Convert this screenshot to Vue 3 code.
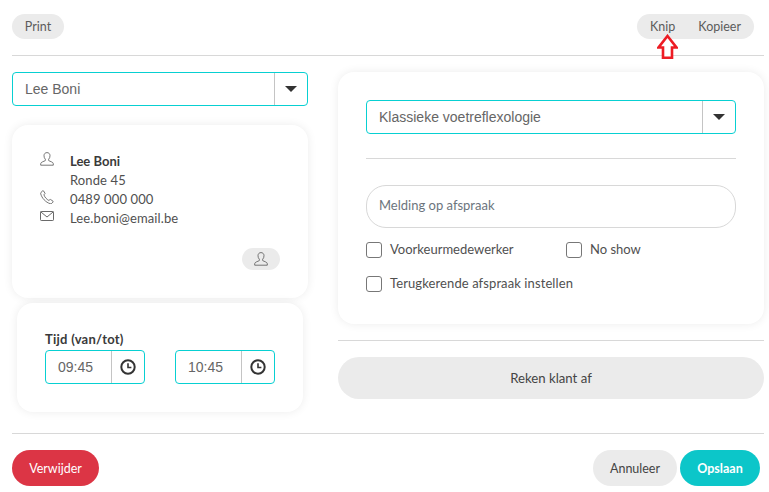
<script setup>
const contactRows = [
  { icon: 'user', text: 'Lee Boni', bold: true },
  { icon: '', text: 'Ronde 45' },
  { icon: 'phone', text: '0489 000 000' },
  { icon: 'mail', text: 'Lee.boni@email.be' },
]
const times = ['09:45', '10:45']
</script>

<template>
  <div class="page">
    <header class="top">
      <button class="pill">Print</button>
      <div class="pill-group">
        <span>Knip</span>
        <span>Kopieer</span>
        <svg class="arrow" width="21" height="25" viewBox="0 0 21 25">
          <path d="M10.500 2 L19.500 13.500 H15 V23.700 H6 V13.500 H1.500 Z" fill="#fff" stroke="#ed1c24" stroke-width="2.600" />
        </svg>
      </div>
    </header>

    <main class="main">
      <section class="left">
        <div class="select">
          <span class="select-text">Lee Boni</span>
          <span class="select-btn"><i class="caret"></i></span>
        </div>

        <div class="card contact">
          <div v-for="row in contactRows" :key="row.text" class="row">
            <span class="row-icon">
              <svg v-if="row.icon === 'user'" width="14" height="14" viewBox="0 0 14 14" fill="none" stroke="#555" stroke-width="0.800">
                <path d="M7 .6C5.100.6 4 2 4 3.700c0 1.500.5 2.700 1.300 3.500.3.400.3 1.200-.1 1.500-.9.600-4.500 1.300-4.500 3v1.500h12.600v-1.500c0-1.700-3.600-2.400-4.500-3-.4-.3-.4-1.100-.1-1.500C9.500 6.400 10 5.200 10 3.700 10 2 8.900.6 7 .6Z" />
              </svg>
              <svg v-else-if="row.icon === 'phone'" width="14" height="14" viewBox="0 0 14 14" fill="none" stroke="#555" stroke-width="0.800">
                <path d="M1 2.400 2.700.8c.3-.2.600-.2.800.1l1.400 2.200c.2.300.1.600-.1.800l-.9.900c.7 2.200 2.800 4.700 5 5.700l1-.9c.2-.2.500-.2.800 0l2.300 1.600c.2.200.3.500.1.800l-1.300 1.300c-.4.400-1 .6-1.600.4C5.600 12.300 1.800 8 .7 3.800.6 3.300.7 2.800 1 2.400Z" />
              </svg>
              <svg v-else-if="row.icon === 'mail'" class="mail" width="14" height="10" viewBox="0 0 14 10" fill="none" stroke="#444" stroke-width="0.800">
                <rect x="0.500" y="0.500" width="13" height="9" rx="0.800" />
                <path d="M.8.900 7 6 13.200.9" />
              </svg>
            </span>
            <span :class="{ strong: row.bold }">{{ row.text }}</span>
          </div>
          <button class="user-pill" aria-label="Klant">
            <svg width="14" height="14" viewBox="0 0 14 14" fill="none" stroke="#555" stroke-width="0.800">
              <path d="M7 .6C5.100.6 4 2 4 3.700c0 1.500.5 2.700 1.300 3.500.3.400.3 1.200-.1 1.500-.9.600-4.500 1.300-4.500 3v1.500h12.600v-1.500c0-1.700-3.600-2.400-4.500-3-.4-.3-.4-1.100-.1-1.500C9.500 6.400 10 5.200 10 3.700 10 2 8.900.6 7 .6Z" />
            </svg>
          </button>
        </div>

        <div class="card time-card">
          <div class="time-label">Tijd (van/tot)</div>
          <div class="times">
            <div v-for="t in times" :key="t" class="time-input">
              <span class="time-value">{{ t }}</span>
              <span class="time-btn">
                <svg width="16" height="16" viewBox="0 0 16 16" fill="none" stroke="#333" stroke-width="2">
                  <circle cx="8" cy="8" r="6.700" />
                  <path d="M8 4.200V8.500H11.400" stroke-width="1.600" />
                </svg>
              </span>
            </div>
          </div>
        </div>
      </section>

      <section class="right">
        <div class="card form">
          <div class="select">
            <span class="select-text">Klassieke voetreflexologie</span>
            <span class="select-btn"><i class="caret"></i></span>
          </div>
          <hr class="rule form-rule" />
          <div class="notice">Melding op afspraak</div>
          <div class="checks first">
            <label class="check wide"><i class="box"></i><span class="check-text">Voorkeurmedewerker</span></label>
            <label class="check"><i class="box"></i><span class="check-text">No show</span></label>
          </div>
          <div class="checks second">
            <label class="check"><i class="box"></i><span class="check-text long">Terugkerende afspraak instellen</span></label>
          </div>
        </div>
        <hr class="rule pay-rule" />
        <button class="pay">Reken klant af</button>
      </section>
    </main>

    <footer class="bottom">
      <button class="btn danger">Verwijder</button>
      <div class="bottom-right">
        <button class="btn muted">Annuleer</button>
        <button class="btn primary">Opslaan</button>
      </div>
    </footer>
  </div>
</template>

<style>
html, body { margin: 0; background: #fff; }
</style>

<style scoped>
.page {
  box-sizing: border-box;
  width: 769px;
  height: 492px;
  padding: 14px 5px 0 12px;
  font-family: "Lato", "Noto Sans", sans-serif;
  font-size: 13px;
  color: #505050;
  overflow: hidden;
}
button { font: inherit; border: 0; cursor: pointer; }

.top {
  display: flex;
  justify-content: space-between;
  align-items: flex-start;
  height: 41px;
  border-bottom: 1px solid #d8d8d8;
  box-sizing: content-box;
}
.pill {
  width: 52px;
  height: 25px;
  padding: 0;
  border-radius: 13px;
  background: #ebebeb;
  color: #5c5c5c;
  font-size: 12.500px;
}
.pill-group {
  position: relative;
  display: flex;
  justify-content: space-between;
  align-items: center;
  box-sizing: border-box;
  width: 117px;
  height: 25px;
  margin-right: 10px;
  padding: 0 13px;
  border-radius: 13px;
  background: #ebebeb;
  color: #5c5c5c;
  font-size: 12.500px;
}
.arrow { position: absolute; left: 20px; top: 20px; }

.main { display: flex; gap: 30px; margin-top: 16px; }
.left { width: 296px; display: flex; flex-direction: column; }
.right { width: 426px; }

.select {
  display: flex;
  box-sizing: border-box;
  height: 34px;
  border: 1px solid #08d0d2;
  border-radius: 4px;
  background: #fff;
}
.select-text {
  flex: 1;
  padding-left: 12px;
  line-height: 32px;
  font-family: "Liberation Sans", sans-serif;
  font-size: 14px;
  color: #666;
}
.select-btn {
  display: flex;
  align-items: center;
  justify-content: center;
  width: 32px;
  border-left: 1px solid #c4c4c4;
}
.caret {
  width: 0;
  height: 0;
  border-left: 6px solid transparent;
  border-right: 6px solid transparent;
  border-top: 6px solid #333;
}

.card {
  box-sizing: border-box;
  border-radius: 16px;
  background: #fff;
  box-shadow: 0 0 10px rgba(0, 0, 0, 0.080);
}
.contact {
  display: flex;
  flex-direction: column;
  height: 173px;
  margin-top: 19px;
  padding: 27px 28px 28px 28px;
}
.row { display: flex; line-height: 19px; height: 19px; letter-spacing: 0.120px; }
.row-icon { width: 30px; display: flex; align-items: flex-start; }
.mail { margin-top: 2px; }
.strong { font-weight: 700; color: #3a3a3a; letter-spacing: 0; }
.user-pill {
  display: flex;
  align-items: center;
  justify-content: center;
  align-self: flex-end;
  width: 38px;
  height: 22px;
  margin-top: auto;
  padding: 0;
  border-radius: 11px;
  background: #ebebeb;
}

.time-card { height: 109px; margin: 5px 5px 0; padding: 26px 28px 0; }
.time-label { margin-bottom: 1px; font-weight: 700; font-size: 13px; line-height: 20px; color: #3a3a3a; letter-spacing: 0.250px; }
.times { display: flex; justify-content: space-between; }
.time-input {
  display: flex;
  box-sizing: border-box;
  width: 100px;
  height: 34px;
  border: 1px solid #08d0d2;
  border-radius: 4px;
}
.time-value {
  flex: 1;
  padding-left: 12px;
  line-height: 32px;
  font-family: "Liberation Sans", sans-serif;
  font-size: 14px;
  color: #666;
}
.time-btn {
  display: flex;
  align-items: center;
  justify-content: center;
  width: 32px;
  border-left: 1px solid #c4c4c4;
}

.form { height: 252px; padding: 28px; }
.rule { margin: 0; border: 0; border-top: 1px solid #d8d8d8; }
.form-rule { margin-top: 24px; }
.notice {
  box-sizing: border-box;
  height: 43px;
  margin-top: 26px;
  padding: 10px 12px;
  border: 1px solid #d8d8d8;
  border-radius: 20px;
  color: #6c757d;
  font-size: 13px;
  line-height: 18px;
}
.checks { display: flex; }
.checks.first { margin-top: 14px; }
.checks.second { margin-top: 18px; }
.check { display: flex; align-items: center; height: 16px; line-height: 14px; }
.check.wide { width: 200px; }
.check-text { margin-top: -2px; }
.long { letter-spacing: 0.100px; }
.box {
  box-sizing: border-box;
  width: 16px;
  height: 16px;
  margin-right: 8px;
  border: 1px solid #777;
  border-radius: 3px;
}

.pay-rule { margin-top: 16px; }
.pay {
  display: block;
  width: 100%;
  height: 42px;
  margin-top: 16px;
  border-radius: 21px;
  background: #ebebeb;
  color: #444;
  font-size: 13.200px;
}

.bottom {
  display: flex;
  justify-content: space-between;
  margin-top: 21px;
  padding: 16px 4px 0 0;
  border-top: 1px solid #d8d8d8;
}
.bottom-right { display: flex; gap: 3px; }
.btn { height: 36px; padding: 0; border-radius: 18px; font-size: 12.500px; }
.danger { width: 87px; background: #dc3545; color: #fff; }
.muted { width: 84px; background: #ebebeb; color: #444; }
.primary { width: 80px; background: #0cc6c9; color: #fff; font-weight: 700; }
</style>
